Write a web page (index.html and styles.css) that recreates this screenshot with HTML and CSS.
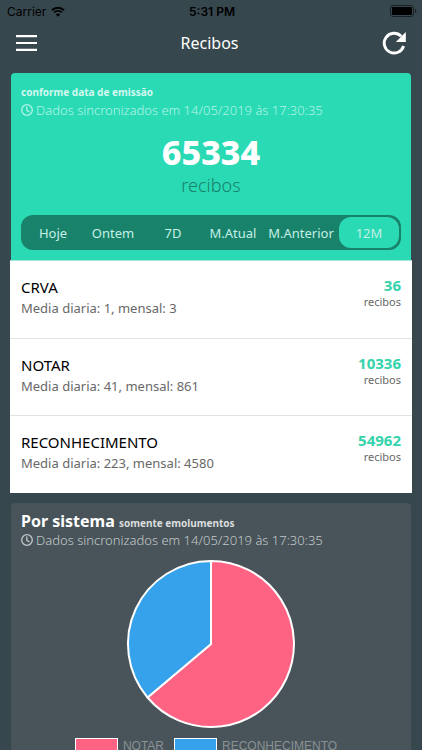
FILE: index.html
```html
<!DOCTYPE html>
<html lang="pt-BR">
<head>
    <meta charset="UTF-8">
    <meta name="viewport" content="width=device-width, initial-scale=1.0">
    <title>Recibos</title>
    <link rel="stylesheet" href="styles.css">
</head>
<body>

    <div class="status-bar">
        <div class="carrier">
            <span>Carrier</span>
            <svg width="14" height="11" viewBox="0 0 14 11" aria-hidden="true">
                <path d="M1 4.2a8.6 8.6 0 0 1 12 0M3.2 6.4a5.5 5.5 0 0 1 7.6 0" fill="none" stroke="#000" stroke-width="1.9"/>
                <path d="M7 10.8 4.9 8.5a3 3 0 0 1 4.2 0z"/>
            </svg>
        </div>
        <strong class="clock">5:31 PM</strong>
        <div class="battery">
            <svg width="27" height="12" viewBox="0 0 27 12" aria-hidden="true">
                <rect x=".5" y=".5" width="23" height="11" rx="2.5" fill="none" stroke="#192024"/>
                <rect x="2" y="2" width="20" height="8" rx="1"/>
                <path d="M25 4v4q1.5-.6 1.5-2T25 4z" fill="#192024"/>
            </svg>
        </div>
    </div>

    <header class="header">
        <button class="icon-button" type="button" aria-label="Menu">
            <svg width="21" height="16" viewBox="0 0 21 16"><path d="M0 1.2h21M0 8h21M0 14.8h21" stroke="#fff" stroke-width="2.2"/></svg>
        </button>
        <h1>Recibos</h1>
        <button class="icon-button" type="button" aria-label="Atualizar">
            <svg width="24" height="24" viewBox="0 0 24 24">
                <path d="M21.6 15A9.9 9.9 0 1 1 19.2 5.2" fill="none" stroke="#fff" stroke-width="2.9"/>
                <path d="M23.8 1v10h-10z" fill="#fff"/>
            </svg>
        </button>
    </header>

    <main class="content">

        <section class="summary">
            <div class="summary-top">
                <p class="note">conforme data de emissão</p>
                <p class="sync">
                    <svg class="clock-icon" viewBox="0 0 12 12" aria-hidden="true"><circle cx="6" cy="6" r="5.3"/><path d="M5.8 2.5v3.8L8.5 8"/></svg>
                    <span>Dados sincronizados em 14/05/2019 às 17:30:35</span>
                </p>
                <p class="total">65334</p>
                <p class="total-label">recibos</p>
                <div class="periods">
                    <button type="button">Hoje</button>
                    <button type="button">Ontem</button>
                    <button type="button">7D</button>
                    <button type="button">M.Atual</button>
                    <button type="button">M.Anterior</button>
                    <button type="button" class="active">12M</button>
                </div>
            </div>
            <ul class="systems">
                <li>
                    <div>
                        <h2>CRVA</h2>
                        <p>Media diaria: 1, mensal: 3</p>
                    </div>
                    <div class="count"><strong>36</strong><span>recibos</span></div>
                </li>
                <li>
                    <div>
                        <h2>NOTAR</h2>
                        <p>Media diaria: 41, mensal: 861</p>
                    </div>
                    <div class="count"><strong>10336</strong><span>recibos</span></div>
                </li>
                <li>
                    <div>
                        <h2>RECONHECIMENTO</h2>
                        <p>Media diaria: 223, mensal: 4580</p>
                    </div>
                    <div class="count"><strong>54962</strong><span>recibos</span></div>
                </li>
            </ul>
        </section>

        <section class="chart-card">
            <h2>Por sistema <small>somente emolumentos</small></h2>
            <p class="sync">
                <svg class="clock-icon" viewBox="0 0 12 12" aria-hidden="true"><circle cx="6" cy="6" r="5.3"/><path d="M5.8 2.5v3.8L8.5 8"/></svg>
                <span>Dados sincronizados em 14/05/2019 às 17:30:35</span>
            </p>
            <svg class="pie" width="168" height="168" viewBox="-84 -84 168 168" role="img" aria-label="Por sistema">
                <path d="M0 0V-83A83 83 0 1 1-63.5 53.5z" fill="#ff6384"/>
                <path d="M0 0-63.5 53.5A83 83 0 0 1 0-83z" fill="#36a2eb"/>
            </svg>
            <ul class="legend">
                <li><span class="swatch pink"></span>NOTAR</li>
                <li><span class="swatch blue"></span>RECONHECIMENTO</li>
            </ul>
        </section>

    </main>

</body>
</html>
```

FILE: styles.css
```css
:root {
    --background-color: #37474e;
    --card-color: #485459;
    --green: #2adab5;
    --dark-green: #19826b;
}

* {
    box-sizing: border-box;
}

body {
    margin: 0;
    height: 100vh;
    display: flex;
    flex-direction: column;
    overflow: hidden;
    background-color: var(--background-color);
    color: #fff;
    font-family: "Noto Sans", "Open Sans", sans-serif;
}

h1, h2, p, ul {
    margin: 0;
    padding: 0;
}

ul {
    list-style: none;
}

button {
    border: 0;
    padding: 0;
    background: none;
    color: inherit;
    font-family: inherit;
}

.status-bar {
    display: grid;
    grid-template-columns: 1fr auto 1fr;
    align-items: center;
    flex: none;
    height: 22px;
    padding: 0 5px 0 7px;
    color: #000;
    font: 12px Inter, sans-serif;
}

.carrier {
    display: flex;
    align-items: center;
    gap: 5px;
}

.clock {
    font-weight: 600;
}

.battery {
    display: flex;
    justify-content: flex-end;
}

.header {
    display: flex;
    align-items: center;
    justify-content: space-between;
    flex: none;
    height: 42px;
    padding: 0 16px;
}

.header h1 {
    font-size: 16px;
    font-weight: 400;
}

.icon-button {
    display: flex;
}

.content {
    flex: 1;
    min-height: 0;
    padding: 9px 10px;
    overflow-y: auto;
    scrollbar-width: none;
}

.summary-top {
    margin: 0 1px;
    padding: 10px;
    border-radius: 4px 4px 0 0;
    background-color: var(--green);
}

.note {
    font-size: 10px;
    font-weight: 700;
    line-height: 18px;
    color: #d3f8ef;
}

.sync {
    display: flex;
    align-items: center;
    gap: 3px;
    font-size: 13px;
    font-weight: 300;
    line-height: 18px;
    color: #b4f4e6;
}

.clock-icon {
    width: 12px;
    height: 12px;
    fill: none;
    stroke: currentColor;
    stroke-width: 1.3;
}

.total {
    margin-top: 11px;
    text-align: center;
    font-size: 34px;
    font-weight: 800;
    line-height: 44px;
}

.total-label {
    text-align: center;
    font-size: 18px;
    font-weight: 300;
    line-height: 22px;
    color: var(--dark-green);
}

.periods {
    display: flex;
    height: 35px;
    margin-top: 19px;
    padding: 2px;
    border-radius: 12px;
    background-color: var(--dark-green);
}

.periods button {
    flex: 1 0 auto;
    min-width: 60px;
    padding: 0 5px;
    border-radius: 12px;
    font-size: 13px;
    font-weight: 400;
    color: #c4f0e5;
}

.periods .active {
    background-color: var(--green);
}

.systems {
    border-top: 1px solid #a5e8da;
    background-color: #fff;
}

.systems li {
    display: flex;
    justify-content: space-between;
    height: 77px;
    padding: 15px 11px;
    color: #686868;
}

.systems li + li {
    border-top: 1px solid #e2e2e2;
}

.systems li:last-child {
    height: 78px;
}

.systems h2 {
    font-size: 15px;
    font-weight: 400;
    line-height: 22px;
    color: #000;
}

.systems p {
    font-size: 13px;
    line-height: 20px;
}

.count {
    display: flex;
    flex-direction: column;
    text-align: right;
    font-size: 11px;
    line-height: 16px;
}

.count strong {
    font-size: 15px;
    line-height: 18px;
    color: #35d3ac;
}

.chart-card {
    margin: 10px 1px 0;
    padding: 8px 10px 10px;
    border-radius: 4px;
    background-color: var(--card-color);
}

.chart-card h2 {
    font-size: 16px;
    line-height: 20px;
}

.chart-card small {
    font-size: 10px;
    line-height: 10px;
    color: #dadddd;
}

.chart-card .sync {
    color: #c3c8ca;
}

.pie {
    display: block;
    margin: 11px auto 10px;
    overflow: visible;
    stroke: #fff;
    stroke-width: 2;
    stroke-linejoin: round;
}

.legend {
    display: flex;
    justify-content: center;
    font: 12px "Liberation Sans", Arial, sans-serif;
    line-height: 16px;
    color: #899195;
}

.legend li {
    display: flex;
    gap: 5px;
    margin-right: 10px;
}

.swatch {
    width: 43px;
    height: 14px;
    border: 1px solid #fff;
}

.pink {
    background-color: #ff6384;
}

.blue {
    background-color: #36a2eb;
}
```
